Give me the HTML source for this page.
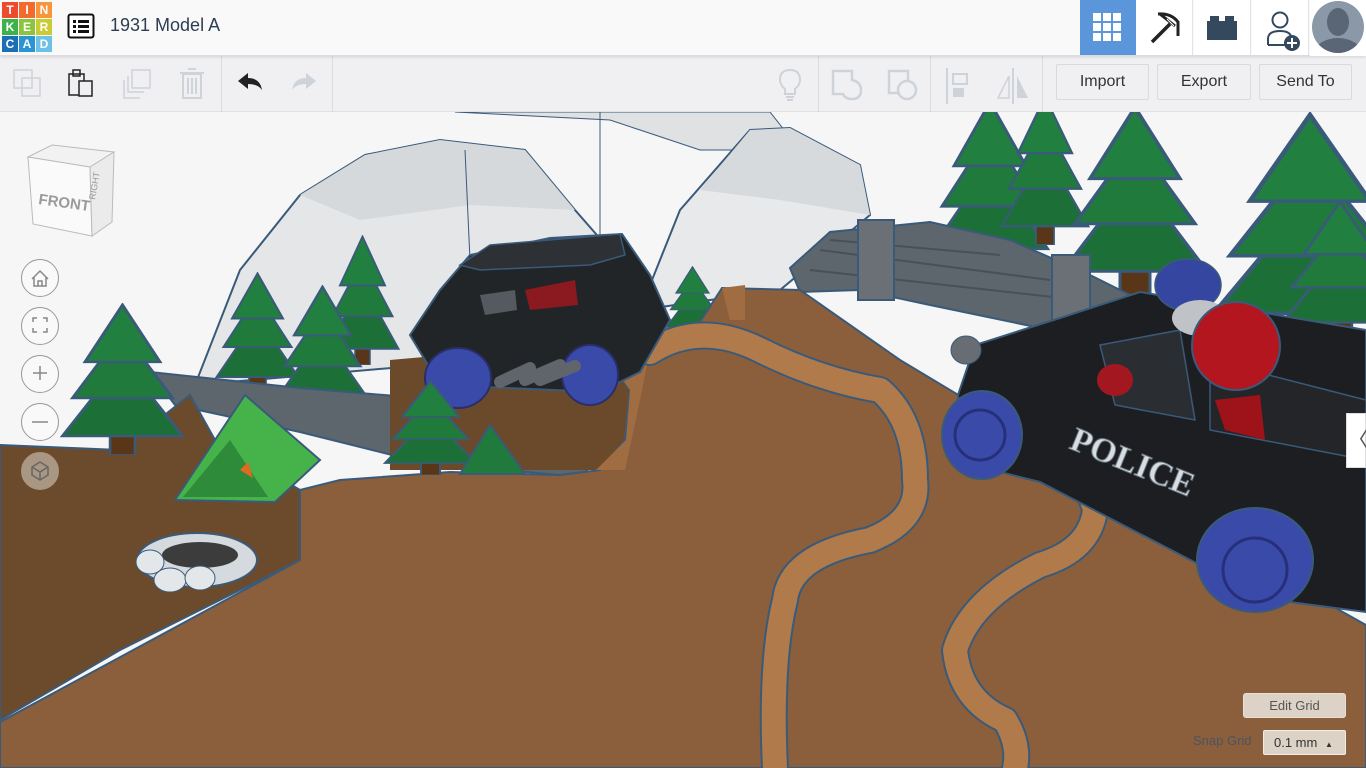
<!DOCTYPE html>
<html><head><meta charset="utf-8"><style>
*{margin:0;padding:0;box-sizing:border-box}
body{width:1366px;height:768px;overflow:hidden;background:#f5f5f5;font-family:"Liberation Sans",sans-serif;position:relative}
#hdr{position:absolute;left:0;top:0;width:1366px;height:56px;background:#f9f9f9;border-bottom:1px solid #dcdcdc;box-shadow:0 1px 3px rgba(0,0,0,.12);z-index:3}
#tb{position:absolute;left:0;top:56px;width:1366px;height:56px;background:#f0f0f2;border-bottom:1px solid #e0e0e0;z-index:2}
.logo{position:absolute;left:2px;top:2px;display:grid;grid-template-columns:repeat(3,16px);gap:1px}
.logo div{width:16px;height:16px;color:#fff;font-weight:bold;font-size:12px;text-align:center;line-height:16px}
.title{position:absolute;left:110px;top:15px;font-size:18px;color:#2d3e50}
.btn{position:absolute;top:8px;height:36px;border:1px solid #d9dadd;background:#f0f0f2;border-radius:2px;font-size:16px;color:#333;text-align:center;line-height:34px}
.sep{position:absolute;top:0;width:1px;height:56px;background:#dcdcdf}
.ctl{position:absolute;left:21px;width:38px;height:38px;border-radius:50%;border:1px solid #999;background:rgba(255,255,255,.35)}
</style></head><body>
<div id="hdr">
 <div class="logo">
  <div style="background:#ee4a2e">T</div><div style="background:#f26b2d">I</div><div style="background:#f9953b">N</div>
  <div style="background:#3db24a">K</div><div style="background:#8cc43f">E</div><div style="background:#c9cc32">R</div>
  <div style="background:#1a6fb5">C</div><div style="background:#2b94d3">A</div><div style="background:#6ec1e6">D</div>
 </div>
 <svg style="position:absolute;left:67px;top:13px" width="28" height="26" viewBox="0 0 28 26"><rect x="1.5" y="1.5" width="25" height="23" rx="2" fill="#fff" stroke="#111" stroke-width="2"/><g fill="#111"><rect x="6" y="7" width="3" height="3"/><rect x="11" y="7" width="11" height="3"/><rect x="6" y="12" width="3" height="3"/><rect x="11" y="12" width="11" height="3"/><rect x="6" y="17" width="3" height="3"/><rect x="11" y="17" width="11" height="3"/></g></svg>
 <div class="title">1931 Model A</div>
 <div style="position:absolute;left:1080px;top:0;width:56px;height:55px;background:#5b96da"></div>
 <svg style="position:absolute;left:1093px;top:13px" width="30" height="30"><g fill="#fff"><rect x="0" y="0" width="8" height="8"/><rect x="10" y="0" width="8" height="8"/><rect x="20" y="0" width="8" height="8"/><rect x="0" y="10" width="8" height="8"/><rect x="10" y="10" width="8" height="8"/><rect x="20" y="10" width="8" height="8"/><rect x="0" y="20" width="8" height="8"/><rect x="10" y="20" width="8" height="8"/><rect x="20" y="20" width="8" height="8"/></g></svg>
 <div style="position:absolute;left:1136px;top:0;width:57px;height:55px;background:#fff;border-right:1px solid #e3e3e3"></div>
 <svg style="position:absolute;left:1147px;top:10px" width="36" height="36" viewBox="0 0 36 36"><path d="M5 32 L23 14" stroke="#222" stroke-width="3.5" fill="none"/><path d="M11 4 Q24 3 31 12 L31 26 M13 4 L18 8 L28 16" stroke="#222" stroke-width="3" fill="none"/><path d="M20 9 L27 16" stroke="#fff" stroke-width="1"/></svg>
 <div style="position:absolute;left:1194px;top:0;width:57px;height:55px;background:#fff;border-right:1px solid #e3e3e3"></div>
 <svg style="position:absolute;left:1207px;top:16px" width="30" height="24"><rect x="0" y="5" width="30" height="19" fill="#34495e"/><rect x="3" y="0" width="9" height="7" fill="#34495e"/><rect x="18" y="0" width="9" height="7" fill="#34495e"/></svg>
 <div style="position:absolute;left:1252px;top:0;width:57px;height:55px;background:#fff;border-right:1px solid #e3e3e3"></div>
 <svg style="position:absolute;left:1265px;top:10px" width="40" height="44"><circle cx="15" cy="10" r="7.5" fill="none" stroke="#34495e" stroke-width="2"/><path d="M3 35 L3 29 Q3 21 15 21 Q24 21 26 26" fill="none" stroke="#34495e" stroke-width="2"/><path d="M3 35 L20 35" stroke="#34495e" stroke-width="2"/><circle cx="27" cy="33" r="8" fill="#34495e"/><path d="M27 28v10M22 33h10" stroke="#fff" stroke-width="2"/></svg>
 <svg style="position:absolute;left:1310px;top:0" width="56" height="56"><rect width="56" height="56" fill="#fff"/><circle cx="28" cy="27" r="26" fill="#8b98a8"/><clipPath id="av"><circle cx="28" cy="27" r="26"/></clipPath><g clip-path="url(#av)" fill="#5a6575"><ellipse cx="28" cy="22" rx="11" ry="14"/><ellipse cx="28" cy="54" rx="24" ry="16"/></g></svg>
</div>
<div id="tb">
 <svg style="position:absolute;left:12px;top:12px" width="32" height="32"><rect x="2" y="2" width="18" height="18" fill="none" stroke="#cdd3d9" stroke-width="1.5"/><rect x="10" y="10" width="18" height="18" fill="none" stroke="#cdd3d9" stroke-width="1.5"/></svg>
 <svg style="position:absolute;left:66px;top:12px" width="32" height="32"><rect x="3" y="6" width="15" height="21" fill="none" stroke="#222" stroke-width="1.5"/><rect x="7" y="2" width="7" height="6" fill="none" stroke="#222" stroke-width="1.5"/><rect x="13" y="13" width="13" height="15" fill="#f0f0f2" stroke="#222" stroke-width="1.5"/></svg>
 <svg style="position:absolute;left:120px;top:12px" width="36" height="32"><rect x="12" y="2" width="18" height="18" fill="none" stroke="#cdd3d9" stroke-width="1.5"/><path d="M8 8 L8 24 L24 24 M4 12 L4 30 L20 30" fill="none" stroke="#cdd3d9" stroke-width="1.5"/></svg>
 <svg style="position:absolute;left:178px;top:10px" width="30" height="34"><rect x="5" y="8" width="18" height="24" fill="none" stroke="#cdd3d9" stroke-width="2"/><path d="M2 7h24M10 3h8M10 12v16M14 12v16M18 12v16" stroke="#cdd3d9" stroke-width="2"/></svg>
 <div class="sep" style="left:221px"></div>
 <svg style="position:absolute;left:236px;top:16px" width="28" height="22"><path d="M2 9 L12 1 L12 6 Q24 6 26 18 Q22 12 12 12 L12 17 Z" fill="#222"/></svg>
 <svg style="position:absolute;left:290px;top:16px" width="28" height="22"><path d="M26 9 L16 1 L16 6 Q4 6 2 18 Q6 12 16 12 L16 17 Z" fill="#cdd3d9"/></svg>
 <div class="sep" style="left:332px"></div>
 <div class="sep" style="left:818px"></div><div class="sep" style="left:930px"></div><div class="sep" style="left:1042px"></div>
 <svg style="position:absolute;left:776px;top:12px" width="28" height="34"><path d="M14 2 Q4 2 4 12 Q4 17 9 21 L9 26 L19 26 L19 21 Q24 17 24 12 Q24 2 14 2 Z" fill="none" stroke="#cdd3d9" stroke-width="2"/><path d="M10 29h8M11 32h6" stroke="#cdd3d9" stroke-width="2"/></svg>
 <svg style="position:absolute;left:830px;top:12px" width="34" height="34"><path d="M3 3 L22 3 L22 12 Q31 14 31 22 Q31 31 22 31 Q15 31 13 26 L3 26 Z" fill="none" stroke="#cdd3d9" stroke-width="2.5"/></svg>
 <svg style="position:absolute;left:886px;top:12px" width="34" height="34"><rect x="3" y="3" width="19" height="22" fill="none" stroke="#cdd3d9" stroke-width="2.5"/><circle cx="21" cy="22" r="9" fill="#f0f0f2" stroke="#cdd3d9" stroke-width="2.5"/></svg>
 <svg style="position:absolute;left:944px;top:10px" width="30" height="40"><path d="M3 2v36" stroke="#cdd3d9" stroke-width="2"/><rect x="9" y="8" width="14" height="10" fill="none" stroke="#cdd3d9" stroke-width="2"/><rect x="9" y="22" width="11" height="9" fill="#cdd3d9"/></svg>
 <svg style="position:absolute;left:994px;top:10px" width="38" height="40"><path d="M19 2v36" stroke="#cdd3d9" stroke-width="2"/><path d="M15 10 L4 32 L15 32 Z" fill="none" stroke="#cdd3d9" stroke-width="1.5"/><path d="M23 10 L34 32 L23 32 Z" fill="#cdd3d9"/></svg>
 <div class="btn" style="left:1056px;width:93px">Import</div>
 <div class="btn" style="left:1157px;width:94px">Export</div>
 <div class="btn" style="left:1259px;width:93px">Send To</div>
</div>

<svg style="position:absolute;left:0;top:112px" width="1366" height="656" viewBox="0 112 1366 656">
<defs>
 <symbol id="tree" viewBox="0 0 100 160" preserveAspectRatio="none">
  <rect x="40" y="138" width="20" height="22" fill="#5a3618" stroke="#3a5a7a" stroke-width="2"/>
  <polygon points="50,60 2,140 98,140" fill="#1c6f36" stroke="#3a5a7a" stroke-width="2.5"/>
  <polygon points="50,30 10,100 90,100" fill="#1f7a3c" stroke="#3a5a7a" stroke-width="2.5"/>
  <polygon points="50,2 20,62 80,62" fill="#217f3f" stroke="#3a5a7a" stroke-width="2.5"/>
 </symbol>
</defs>
<rect x="0" y="112" width="1366" height="656" fill="#f6f6f6"/>
<polygon points="455,112 770,112 800,150 700,150 610,120" fill="#dfe1e3" stroke="#3a5a7a" stroke-width="1"/>
<polygon points="195,385 240,270 300,195 365,155 440,140 525,150 575,210 610,250 645,300 655,345" fill="#e4e6e8" stroke="#3a5a7a" stroke-width="2"/>
<polygon points="300,195 365,155 440,140 525,150 575,210 470,205 360,220" fill="#d6d9dc"/>
<polygon points="640,310 680,210 750,130 790,128 860,165 870,215 780,290" fill="#e7e9eb" stroke="#3a5a7a" stroke-width="2"/>
<polygon points="700,190 750,130 790,128 860,165 870,215 780,200" fill="#d7dadd"/>
<line x1="600" y1="112" x2="600" y2="250" stroke="#3a5a7a"/>
<line x1="465" y1="150" x2="470" y2="260" stroke="#3a5a7a"/>
<use href="#tree" x="930" y="100" width="120" height="170"/>
<use href="#tree" x="1000" y="95" width="90" height="150"/>
<use href="#tree" x="1060" y="105" width="150" height="190"/>
<use href="#tree" x="1210" y="112" width="200" height="230"/>
<use href="#tree" x="1280" y="200" width="120" height="140"/>
<polygon points="790,268 830,232 930,222 1010,240 1090,275 1140,300 1050,330 930,305 860,290 800,292" fill="#5d656d" stroke="#3a5a7a" stroke-width="2"/>
<g stroke="#48505a" stroke-width="2" fill="none"><path d="M820,250 L1050,280 M810,270 L1080,300 M830,240 L1000,255"/></g>
<rect x="858" y="220" width="36" height="80" fill="#6a7076" stroke="#3a5a7a" stroke-width="2"/>
<rect x="1052" y="255" width="38" height="80" fill="#6a7076" stroke="#3a5a7a" stroke-width="2"/>
<use href="#tree" x="215" y="272" width="85" height="120"/>
<use href="#tree" x="325" y="235" width="75" height="130"/>
<use href="#tree" x="275" y="285" width="95" height="130"/>
<use href="#tree" x="665" y="266" width="55" height="70"/>
<polygon points="150,372 300,388 420,398 580,450 590,478 420,462 300,432 175,405" fill="#5d656d" stroke="#3a5a7a" stroke-width="2"/>
<polygon points="0,445 120,450 190,395 215,440 300,490 300,560 120,650 0,720" fill="#6c4a2c" stroke="#3a5a7a" stroke-width="2"/>
<polygon points="390,360 560,345 620,360 640,400 625,470 390,470" fill="#6b4a2c"/>
<polygon points="300,490 340,480 450,472 560,475 600,470 625,440 630,390 612,365 650,345 700,322 722,288 800,290 900,360 1000,420 1366,625 1366,768 0,768 0,722 300,560" fill="#8b5f3b" stroke="#3a5a7a" stroke-width="2"/>
<polygon points="596,470 626,440 630,390 612,365 650,350 640,400 625,470" fill="#a06d42"/>
<polygon points="722,288 745,285 745,320 730,320" fill="#a06d42"/>
<g fill="none" stroke-linecap="round" stroke-linejoin="round">
 <path d="M650,352 Q700,320 760,350 T880,390 Q915,420 915,480 Q920,520 870,540 Q790,555 785,600 Q770,660 775,768" stroke="#3a5a7a" stroke-width="28"/>
 <path d="M650,352 Q700,320 760,350 T880,390 Q915,420 915,480 Q920,520 870,540 Q790,555 785,600 Q770,660 775,768" stroke="#b07a4a" stroke-width="24"/>
 <path d="M985,420 Q1080,450 1095,510 Q1090,550 1040,565 Q970,600 955,650 Q960,700 1005,720 Q1020,745 1015,768" stroke="#3a5a7a" stroke-width="28"/>
 <path d="M985,420 Q1080,450 1095,510 Q1090,550 1040,565 Q970,600 955,650 Q960,700 1005,720 Q1020,745 1015,768" stroke="#b07a4a" stroke-width="24"/>
</g>
<polygon points="410,335 440,290 470,255 550,238 622,234 650,275 670,320 640,372 600,392 440,385" fill="#222528" stroke="#3a5a7a" stroke-width="2"/>
<polygon points="460,265 490,245 620,234 625,255 590,265 480,270" fill="#2d3034" stroke="#3a5a7a" stroke-width="1.5"/>
<polygon points="525,290 575,280 578,305 530,310" fill="#8a1a20"/>
<polygon points="480,295 515,290 517,310 485,315" fill="#555a60"/>
<ellipse cx="458" cy="378" rx="33" ry="30" fill="#3a4aa8" stroke="#2a2e6a" stroke-width="2"/>
<ellipse cx="590" cy="375" rx="28" ry="30" fill="#3a4aa8" stroke="#2a2e6a" stroke-width="2"/>
<g stroke="#5f656b" stroke-width="12" stroke-linecap="round"><path d="M500,382 L530,368 M525,380 L560,365 M540,380 L575,366"/></g>
<use href="#tree" x="60" y="303" width="125" height="152"/>
<use href="#tree" x="383" y="380" width="95" height="95"/>
<polygon points="490,425 460,474 525,474" fill="#1f7a3c" stroke="#3a5a7a" stroke-width="2"/>
<polygon points="175,500 245,395 320,460 275,502" fill="#45b34a" stroke="#3a5a7a" stroke-width="2"/>
<polygon points="183,497 230,440 268,497" fill="#2e8b3a"/>
<polygon points="240,470 248,462 253,478" fill="#e06a20"/>
<ellipse cx="197" cy="560" rx="60" ry="27" fill="#d5dade" stroke="#3a5a7a" stroke-width="2"/>
<ellipse cx="200" cy="555" rx="38" ry="13" fill="#3c3c3c"/>
<ellipse cx="170" cy="580" rx="16" ry="12" fill="#e4e7ea" stroke="#3a5a7a"/>
<ellipse cx="200" cy="578" rx="15" ry="12" fill="#e4e7ea" stroke="#3a5a7a"/>
<ellipse cx="150" cy="562" rx="14" ry="12" fill="#e4e7ea" stroke="#3a5a7a"/>
<polygon points="958,395 975,345 1060,318 1140,292 1366,330 1366,612 1290,602 1200,565 1040,482 960,462" fill="#1c1e21" stroke="#3a5a7a" stroke-width="2"/>
<polygon points="1100,345 1180,330 1195,420 1115,405" fill="#2a2d31" stroke="#3a5a7a" stroke-width="1.5"/>
<polygon points="1210,360 1366,400 1366,460 1210,430" fill="#232528" stroke="#3a5a7a" stroke-width="1.5"/>
<polygon points="1215,400 1260,395 1265,440 1225,430" fill="#9e1219"/>
<ellipse cx="1115" cy="380" rx="18" ry="16" fill="#a31820"/>
<ellipse cx="966" cy="350" rx="15" ry="14" fill="#676d73" stroke="#3a5a7a"/>
<ellipse cx="1188" cy="285" rx="33" ry="26" fill="#3546a0" stroke="#3a5a7a" stroke-width="1.5"/>
<ellipse cx="1200" cy="318" rx="28" ry="18" fill="#bfc3c8"/>
<circle cx="1236" cy="346" r="44" fill="#b3161f" stroke="#3a5a7a" stroke-width="2"/>
<ellipse cx="982" cy="435" rx="40" ry="44" fill="#3a4aa8" stroke="#3a5a7a" stroke-width="2"/>
<circle cx="980" cy="435" r="25" fill="none" stroke="#26307a" stroke-width="3"/>
<ellipse cx="1255" cy="560" rx="58" ry="52" fill="#3a4aa8" stroke="#3a5a7a" stroke-width="2"/>
<circle cx="1255" cy="570" r="32" fill="none" stroke="#26307a" stroke-width="3"/>
<text x="1068" y="448" transform="rotate(22 1068 448)" font-family="Liberation Serif,serif" font-weight="bold" font-size="34" fill="#d8dde2" stroke="#6a7680" stroke-width="1">POLICE</text>
<polygon points="28,157 52,145 114,152 90,167" fill="#f2f2f2" stroke="#bbb"/>
<polygon points="28,157 90,167 92,236 33,224" fill="#fafafa" stroke="#bbb"/>
<polygon points="90,167 114,152 112,222 92,236" fill="#ebebeb" stroke="#bbb"/>
<text x="38" y="204" transform="rotate(8 38 204)" font-size="15" font-weight="bold" fill="#9a9a9a">FRONT</text>
<text x="95" y="200" font-size="9" fill="#999" transform="rotate(-80 95 200)">RIGHT</text>
</svg>
<div class="ctl" style="top:259px"></div><div class="ctl" style="top:307px"></div><div class="ctl" style="top:355px"></div><div class="ctl" style="top:403px"></div>
<div class="ctl" style="top:452px;background:#a99683;border-color:#a99683"></div>
<svg style="position:absolute;left:21px;top:259px" width="38" height="240" fill="none" stroke="#888" stroke-width="1.5">
 <path d="M11 20 L19 12 L27 20 M13 18 L13 27 L25 27 L25 18 M17 27 L17 22 L21 22 L21 27"/>
 <path d="M12 63v-4h4M22 59h4v4M26 69v4h-4M16 73h-4v-4"/>
 <path d="M19 107v14M12 114h14"/>
 <path d="M11 163h16"/>
 <path d="M19 203 L27 208 L27 216 L19 221 L11 216 L11 208 Z M11 208 L19 213 L27 208 M19 213 L19 221" stroke="#666"/>
</svg>
<div style="position:absolute;left:1346px;top:413px;width:20px;height:55px;background:#fff;border:1px solid #ddd;color:#555;font-size:22px;line-height:52px;text-align:center">〈</div>
<div style="position:absolute;left:1243px;top:693px;width:103px;height:25px;background:#dcd2c6;border:1px solid #e8e0d6;border-radius:3px;font-size:13px;color:#555;text-align:center;line-height:23px">Edit Grid</div>
<div style="position:absolute;left:1193px;top:733px;font-size:13px;color:#4a5560">Snap Grid</div>
<div style="position:absolute;left:1263px;top:730px;width:83px;height:25px;background:#dcd2c6;border:1px solid #f0ece6;border-radius:2px;font-size:13px;color:#333;line-height:23px;padding-left:10px">0.1 mm <span style="font-size:8px;margin-left:4px">▲</span></div>
</body></html>
